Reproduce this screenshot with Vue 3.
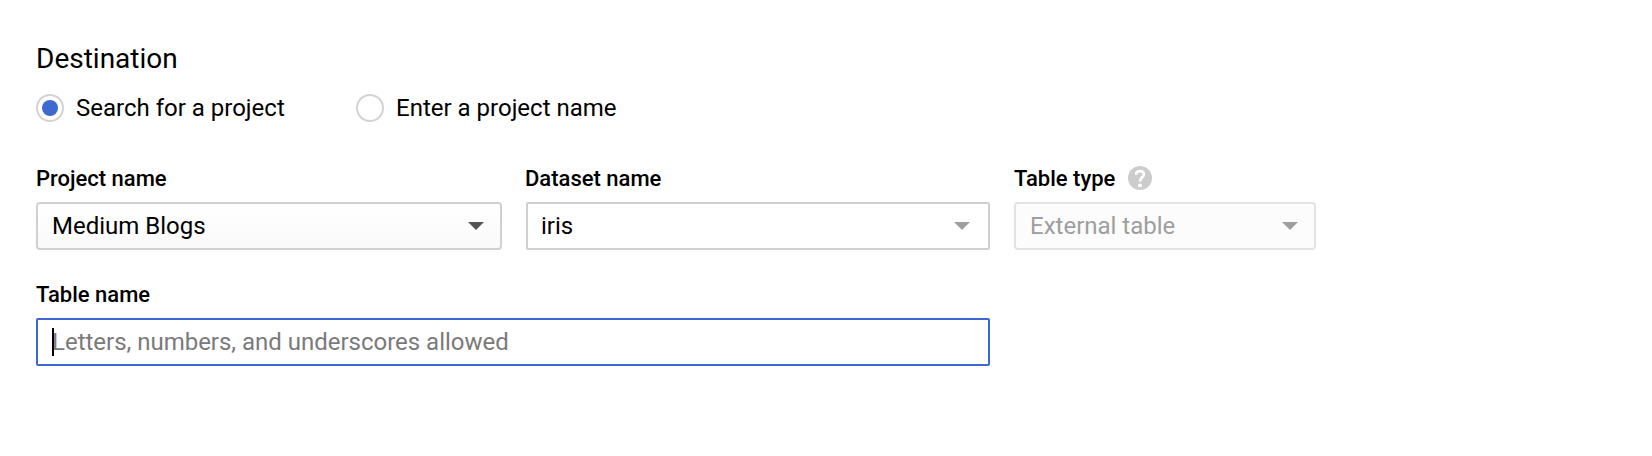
<script setup>
const radios = [
  { label: 'Search for a project', on: true },
  { label: 'Enter a project name', on: false },
]
const selects = [
  { label: 'Project name', value: 'Medium Blogs', kind: 'project' },
  { label: 'Dataset name', value: 'iris', kind: 'dataset' },
  { label: 'Table type', value: 'External table', kind: 'disabled', help: true },
]
</script>

<template>
  <main class="form">
    <h2>Destination</h2>
    <div class="radios">
      <label v-for="r in radios" :key="r.label" class="radio">
        <span class="ring"><span v-if="r.on" class="dot"></span></span>
        <span class="text">{{ r.label }}</span>
      </label>
    </div>
    <div class="row">
      <div v-for="s in selects" :key="s.label" class="field" :class="s.kind">
        <div class="label">
          <span>{{ s.label }}</span>
          <svg v-if="s.help" class="help" viewBox="0 0 24 24">
            <circle cx="12" cy="12" r="12" fill="#ccc" />
            <path d="M8.100 8.700C8.100 6.500 9.700 5.100 12 5.100s3.900 1.400 3.900 3.500c0 2.700-3.900 3-3.900 7" fill="none" stroke="#fff" stroke-width="2.700" />
            <circle cx="12" cy="19.400" r="1.900" fill="#fff" />
          </svg>
        </div>
        <div class="box">
          <span class="value">{{ s.value }}</span>
          <svg class="arrow" viewBox="0 0 16 8"><path d="M0 0h16L8 8z" fill="currentColor" /></svg>
        </div>
      </div>
    </div>
    <div class="field table">
      <div class="label"><span>Table name</span></div>
      <div class="box"><i class="caret"></i><span class="value">Letters, numbers, and underscores allowed</span></div>
    </div>
  </main>
</template>

<style>
body { background: #fff; }
</style>
<style scoped>
.form { box-sizing: border-box; height: 456px; padding: 42px 36px 0; font-family: Roboto, sans-serif; font-size: 24px; color: #000; }
h2 { margin: 0; font-size: 28px; font-weight: 400; line-height: 34px; }
.radios { display: flex; margin-top: 18px; height: 28px; }
.radio { display: flex; align-items: center; width: 320px; line-height: 28px; white-space: nowrap; }
.ring { box-sizing: border-box; width: 28px; height: 28px; border: 2px solid #d3d3d3; border-radius: 50%; margin-right: 12px; display: flex; align-items: center; justify-content: center; }
.dot { width: 16px; height: 16px; border-radius: 50%; background: #3e69d1; }
.row { display: flex; gap: 24px; margin-top: 42px; }
.label { display: flex; align-items: center; height: 28px; margin-bottom: 10px; font-size: 22px; font-weight: 500; }
.help { width: 24px; height: 24px; margin-left: 13px; }
.box { box-sizing: border-box; height: 48px; border: 2px solid #d0d0d0; border-radius: 4px; display: flex; align-items: center; padding: 0 16px 0 14px; position: relative; line-height: 28px; }
.value { flex: 1; white-space: nowrap; }
.arrow { width: 16px; height: 8px; color: #555; }
.project { width: 466px; }
.project .box { background: linear-gradient(#fff, #fafafa); }
.dataset { width: 464px; }
.dataset .label { margin-left: -1px; }
.dataset .box { border-radius: 2px; padding: 0 18px 0 13px; }
.dataset .arrow, .disabled .arrow { color: #9e9e9e; }
.disabled { width: 302px; }
.disabled .box { color: #9e9e9e; border-color: #e3e3e3; background: #fcfcfc; }
.table { width: 954px; margin-top: 30px; }
.table .box { border-color: #3e69d1; border-radius: 2px; color: #7a7a7a; }
.table .value { letter-spacing: -0.012px; }
.caret { position: absolute; left: 14px; top: 8px; width: 2px; height: 28px; background: #000; }
</style>
